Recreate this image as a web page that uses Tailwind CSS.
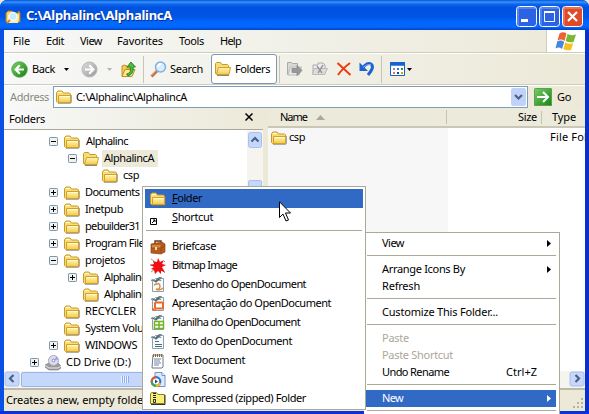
<!DOCTYPE html>
<html lang="en"><head><meta charset="utf-8"><title>C:\Alphalinc\AlphalincA</title>
<script src="https://cdn.jsdelivr.net/npm/@tailwindcss/browser@4"></script></head>
<body class="overflow-hidden bg-[#ece9d8] font-['Noto_Sans','DejaVu_Sans_Condensed',sans-serif] text-[11px] leading-[17px] text-black whitespace-nowrap [&_[data-w]]:pb-[2px]">
<svg class="absolute size-0">
<defs>
<linearGradient id="yel" x2="0" y2="1"><stop stop-color="#fff9b4"/><stop offset="1" stop-color="#f6c846"/></linearGradient>
<linearGradient id="grn" x2="1" y2="1"><stop stop-color="#7ed06a"/><stop offset="1" stop-color="#148010"/></linearGradient>
<linearGradient id="gry" x2="1" y2="1"><stop stop-color="#ddd"/><stop offset="1" stop-color="#999"/></linearGradient>
</defs>
<symbol id="folder" viewBox="0 0 16 16"><path d="M2 14.5h12.5l1-1V6" fill="none" stroke="#777" stroke-opacity=".6"/><path d="M.5 12.5V3.5l1.500-1.500h4l1.500 2h6l1 1v8.500h-13z" fill="#f8dc7c" stroke="#c99a20"/><path d="M2.500 6.500h12v7h-12z" fill="url(#yel)" stroke="#d1a22b"/><path d="M2 3.500h4M3.500 7.500h10" stroke="#fffbd5"/></symbol>
<symbol id="open" viewBox="0 0 16 16"><path d="M2 14.500h12" stroke="#888"/><path d="M.5 12.500V2.500l1-1h4l1.500 2h5.500l1 1v8z" fill="#f7dc7d" stroke="#c99a20"/><path d="M1.500 13.500l2-7h12l-1.500 7z" fill="url(#yel)" stroke="#d1a22b"/></symbol>
<symbol id="plus" viewBox="0 0 9 9"><rect x=".5" y=".5" width="8" height="8" rx=".7" fill="#f4f2ea" stroke="#7898b5"/><path d="M2 4.500h5M4.500 2v5" stroke="#000"/></symbol>
<symbol id="minus" viewBox="0 0 9 9"><rect x=".5" y=".5" width="8" height="8" rx=".7" fill="#f4f2ea" stroke="#7898b5"/><path d="M2 4.500h5" stroke="#000"/></symbol>
<symbol id="page" viewBox="0 0 16 16"><path d="M2.500 4.500l3-3h8v13h-11z" fill="#f8fafc" stroke="#8aa0ad"/><path d="M1 3.500c2-2 3-.5 4 .5 2-3 5-2 6-.5-2-.5-3 0-5 2-2-1.500-3-2-5-2zM7 2c2-2 4-2 5-1" fill="#4a6470" stroke="#607b88" stroke-width=".6"/></symbol>
</svg>

<main class="relative h-[414px] w-[589px] overflow-hidden">
<div class="flex h-[414px] flex-col rounded-t-[7px] bg-[#0831d9]">
 <header class="flex h-[30px] shrink-0 items-center rounded-t-[7px] bg-[linear-gradient(180deg,#0058d8_0%,#3a91fb_7%,#0b65ec_14%,#0052de_25%,#0054e5_55%,#0268fd_75%,#0267fc_90%,#0043c8_100%)] pl-[5px] pr-[6px] pt-[3px]">
  <svg class="size-4" viewBox="0 0 16 16"><path d="M1 13V4l2-2h4l1 2h5l1-2 1 2v9z" fill="#f4cf65" stroke="#a97818"/><path d="M3 6h11l-1 8H2z" fill="#ffeea0"/><circle cx="8" cy="7.500" r="4" fill="#c6ecff" stroke="#f5f9ff" stroke-width="1.300"/><path d="M5 11l-3 3" stroke="#d98425" stroke-width="2"/></svg>
  <span data-w="146" class="ml-[5px] text-[13px] font-bold text-white [text-shadow:1px_1px_0_#0a2d8a]">C:\Alphalinc\AlphalincA</span>
  <div class="ml-auto flex gap-[2px]">
   <svg class="size-[21px]" viewBox="0 0 21 21"><rect x=".5" y=".5" width="20" height="20" rx="3" fill="#2c62e4" stroke="#fff"/><path d="M2 19V2h17" fill="none" stroke="#7da2f5"/><path d="M5 14.500h7" stroke="#fff" stroke-width="3"/></svg>
   <svg class="size-[21px]" viewBox="0 0 21 21"><rect x=".5" y=".5" width="20" height="20" rx="3" fill="#2c62e4" stroke="#fff"/><path d="M2 19V2h17" fill="none" stroke="#7da2f5"/><path d="M5.500 5.500h10v10h-10zM5 6.500h11" fill="none" stroke="#fff"/><path d="M5 6h11" stroke="#fff" stroke-width="2"/></svg>
   <svg class="size-[21px]" viewBox="0 0 21 21"><rect x=".5" y=".5" width="20" height="20" rx="3" fill="#df4b26" stroke="#fff"/><path d="M2 19V2h17" fill="none" stroke="#f19a7f"/><path d="M6 6l9 9M15 6l-9 9" stroke="#fff" stroke-width="2.200"/></svg>
  </div>
 </header>
 <div class="flex h-[381px] shrink-0 flex-col overflow-hidden border-l-4 border-r-4 border-l-[#0a50e4] border-r-[#0831c9] bg-[#ece9d8]">
  <nav class="flex h-[23px] shrink-0 items-center border-b border-[#d0ccba] bg-linear-to-r from-[#f7f8f8] to-[#ece9d8] pl-[9px]">
   <span class="w-[33px]"><span data-w="17">File</span></span><span class="w-[34px]"><span data-w="18">Edit</span></span><span class="w-[37px]"><span data-w="22">View</span></span><span class="w-[62px]"><span data-w="46">Favorites</span></span><span class="w-[41px]"><span data-w="25">Tools</span></span><span data-w="21">Help</span>
   <div class="ml-auto flex h-[22px] w-[39px] justify-center border-l border-[#d0ccba] bg-white">
    <svg class="mt-px h-5 w-[22px]" viewBox="0 0 22 20"><path d="M4.500 2.500Q8 0 11.500 2.500L9.500 10Q6 7.500 2.500 9.500z" fill="#ee6135"/><path d="M12.500 3Q16 5 21 3.500L18.500 11Q14 12 10.700 10z" fill="#78b832"/><path d="M2.200 10.500Q6 8.500 9.200 11L7 18Q4 15.500.5 17.500z" fill="#4487dc"/><path d="M10.300 11.500Q14 13.500 18.200 12.300L16 19Q12 20 8.300 18z" fill="#f6c023"/></svg>
   </div>
  </nav>
  <div class="flex h-[32px] shrink-0 items-center border-b border-t border-b-[#d0ccba] border-t-white bg-linear-to-r from-[#f7f8f8] to-[#ece9d8]">
   <svg class="ml-[7px] size-[17px]" viewBox="0 0 17 17"><circle cx="8.500" cy="8.500" r="7.800" fill="url(#grn)" stroke="#459b3d" stroke-width=".7"/><path d="M13 8.500H5M8.800 4.300L4.600 8.500l4.200 4.200" fill="none" stroke="#fff" stroke-width="2.200"/></svg>
   <span data-w="23" class="ml-[4px]">Back</span>
   <svg class="ml-[9px] h-[3px] w-[5px]" viewBox="0 0 5 3"><path d="M0 0h5L2.500 3z"/></svg>
   <svg class="ml-[12px] size-[17px]" viewBox="0 0 17 17"><circle cx="8.500" cy="8.500" r="7.500" fill="url(#gry)" stroke="#b5b5b5"/><path d="M4 8.500h8M8.200 4.300l4.200 4.200-4.200 4.200" fill="none" stroke="#fff" stroke-width="2.200"/></svg>
   <svg class="ml-[9px] h-[3px] w-[5px]" viewBox="0 0 5 3"><path d="M0 0h5L2.500 3z" fill="#b9b6a8"/></svg>
   <svg class="ml-[9px] h-[17px] w-[15px]" viewBox="0 0 15 17"><path d="M1 15V5l2-1 3 1v2h5v8z" fill="#f2cc56" stroke="#bd912a"/><path d="M1 15.500l3-7h10l-3 7z" fill="#ffe98a" stroke="#bd912a"/><path d="M5.500 13Q11 12 9 6H6l4-5 4.500 5h-2.300Q13 13 7 15z" fill="#4cba3c" stroke="#18761a" stroke-width=".8"/></svg>
   <i class="ml-[7px] h-[27px] w-px bg-[#c9c5b2]"></i>
   <svg class="ml-[6px] size-[17px]" viewBox="0 0 17 17"><path d="M1.500 15.500l5.500-5.500" stroke="#c66e50" stroke-width="2.800"/><path d="M1 14.500l5-5" stroke="#f0b898"/><circle cx="10.500" cy="6" r="5" fill="#d5f1ff" stroke="#87ace0" stroke-width="1.500"/><path d="M8 6q0-3 3-3" fill="none" stroke="#fff" stroke-width="1.500"/></svg>
   <span data-w="33" class="ml-[3px]">Search</span>
   <div class="ml-[8px] flex h-[30px] w-[66px] items-center rounded-[3px] border border-[#7a98af] bg-white pl-[3px]"><svg class="size-4"><use href="#open"/></svg><span data-w="35" class="ml-[4px]">Folders</span></div>
   <i class="ml-[2px] h-[27px] w-px bg-[#c9c5b2]"></i>
   <svg class="ml-[7px] size-4" viewBox="0 0 16 16"><path d="M.5 13.500v-12h4l1 1h5v11z" fill="#d9d9d4" stroke="#aaa"/><path d="M1 14l2.500-8h11L12 14z" fill="#e9e9e6" stroke="#bbb"/><path d="M5 7.500h5v-3l5 5-5 5v-3H5z" fill="#999" stroke="#777" stroke-width=".6"/></svg>
   <svg class="ml-[9px] size-4" viewBox="0 0 16 16"><path d="M1 4h5V2h5l2 2v9H1z" fill="#eee" stroke="#aaa"/><path d="M.5 13.500l2-6h13l-3 6z" fill="#ddd" stroke="#bbb"/><path d="M5 5l5 7M11 4l-5 8" stroke="#999" stroke-width="1.500"/></svg>
   <svg class="ml-[8px] size-4" viewBox="0 0 16 16"><path d="M1.500 2Q8 8 14.500 14M14 2Q6 8 2 14" fill="none" stroke="#ef3c10" stroke-width="2"/></svg>
   <svg class="ml-[7px] size-4" viewBox="0 0 16 16"><path d="M3 7.500Q8 1 12 3q4 3-3 11" fill="none" stroke="#1d64d1" stroke-width="3"/><path d="M.5 1.500v8.500h8.500z" fill="#1d64d1"/><path d="M4 6.500Q9 2 12 3.500" fill="none" stroke="#6ba5f5"/></svg>
   <i class="ml-[6px] h-[27px] w-px bg-[#c9c5b2]"></i>
   <svg class="ml-[8px] h-[14px] w-[15px]" viewBox="0 0 15 14"><path d="M.5.5h14v13H.5z" fill="#fff" stroke="#1563c5"/><path d="M0 2h15" stroke="#1563d0" stroke-width="3.500"/><path d="M3 6h2v2H3z" fill="#8a8fc5"/><path d="M7 6h2v2H7z" fill="#3375d5"/><path d="M11 6h2v2h-2z" fill="#28983b"/><path d="M3 10h2v2H3z" fill="#ed704a"/><path d="M7 10h2v2H7z" fill="#173b9e"/><path d="M11 10h2v2h-2z" fill="#d2a015"/></svg>
   <svg class="ml-[2px] h-[3px] w-[5px]" viewBox="0 0 5 3"><path d="M0 0h5L2.500 3z"/></svg>
  </div>
  <div class="flex h-[23px] shrink-0 items-center border-t border-white bg-linear-to-r from-[#f7f8f8] to-[#ece9d8]">
   <span data-w="39" class="ml-[6px] text-[#8b897d]">Address</span>
   <div class="ml-[4px] flex h-[22px] w-[475px] items-center border border-[#7f9db9] bg-white pl-[2px]">
    <svg class="size-4"><use href="#folder"/></svg><span data-w="111" class="ml-[4px]">C:\Alphalinc\AlphalincA</span>
    <svg class="ml-auto mr-px h-[18px] w-[15px]" viewBox="0 0 15 18"><rect width="15" height="18" rx="2" fill="#c0d2fa"/><path d="M4 7l3.500 3.500L11 7" fill="none" stroke="#4d6185" stroke-width="2.200"/></svg>
   </div>
   <svg class="ml-[6px] size-[18px]" viewBox="0 0 18 18"><rect width="18" height="18" rx="1.500" fill="url(#grn)"/><rect x=".5" y=".5" width="17" height="17" rx="1" fill="none" stroke="#55a553"/><path d="M3 9h11M9 4l5 5-5 5" fill="none" stroke="#fff" stroke-width="2"/></svg>
   <span data-w="14" class="ml-[5px]">Go</span>
  </div>
  <div class="flex h-[280px] shrink-0">
   <section class="flex w-[259px] shrink-0 flex-col">
    <div class="flex h-[22px] items-center justify-between border-b border-[#aca899] bg-linear-to-r from-[#f7f8f8] to-[#ece9d8] pl-[5px] pr-[10px]"><span data-w="36" class="pt-[2px]">Folders</span><svg class="mb-[4px] size-2" viewBox="0 0 8 8"><path d="M.5.500l7 7M7.500.500l-7 7" stroke="#000" stroke-width="1.500"/></svg></div>
    <div class="flex h-[241px] bg-white">
     <div class="w-[243px] overflow-hidden pt-[3px]">
      <div class="flex h-[17px] items-center pl-[45px]"><svg class="size-[9px]"><use href="#minus"/></svg><svg class="ml-[6px] size-4"><use href="#folder"/></svg><span data-w="42" class="ml-[6px]">Alphalinc</span></div>
      <div class="flex h-[17px] items-center pl-[64px]"><svg class="size-[9px]"><use href="#minus"/></svg><svg class="ml-[6px] size-4"><use href="#open"/></svg><div class="ml-[3px] flex h-[17px] w-[56px] items-center bg-[#ece9d8] pl-[2px]"><span data-w="50">AlphalincA</span></div></div>
      <div class="flex h-[17px] items-center pl-[98px]"><svg class="size-4"><use href="#folder"/></svg><span data-w="16" class="ml-[5px]">csp</span></div>
      <div class="flex h-[17px] items-center pl-[45px]"><svg class="size-[9px]"><use href="#plus"/></svg><svg class="ml-[6px] size-4"><use href="#folder"/></svg><span data-w="110" class="ml-[5px]">Documents and Setting</span></div>
      <div class="flex h-[17px] items-center pl-[45px]"><svg class="size-[9px]"><use href="#plus"/></svg><svg class="ml-[6px] size-4"><use href="#folder"/></svg><span data-w="38" class="ml-[5px]">Inetpub</span></div>
      <div class="flex h-[17px] items-center pl-[45px]"><svg class="size-[9px]"><use href="#plus"/></svg><svg class="ml-[6px] size-4"><use href="#folder"/></svg><span data-w="55" class="ml-[5px]">pebuilder31</span></div>
      <div class="flex h-[17px] items-center pl-[45px]"><svg class="size-[9px]"><use href="#plus"/></svg><svg class="ml-[6px] size-4"><use href="#folder"/></svg><span data-w="64" class="ml-[5px]">Program Files</span></div>
      <div class="flex h-[17px] items-center pl-[45px]"><svg class="size-[9px]"><use href="#minus"/></svg><svg class="ml-[6px] size-4"><use href="#folder"/></svg><span data-w="40" class="ml-[5px]">projetos</span></div>
      <div class="flex h-[17px] items-center pl-[64px]"><svg class="size-[9px]"><use href="#plus"/></svg><svg class="ml-[6px] size-4"><use href="#folder"/></svg><span data-w="42" class="ml-[5px]">Alphalinc</span></div>
      <div class="flex h-[17px] items-center pl-[79px]"><svg class="size-4"><use href="#folder"/></svg><span data-w="42" class="ml-[5px]">Alphalinc</span></div>
      <div class="flex h-[17px] items-center pl-[60px]"><svg class="size-4"><use href="#folder"/></svg><span data-w="51" class="ml-[5px]">RECYCLER</span></div>
      <div class="flex h-[17px] items-center pl-[60px]"><svg class="size-4"><use href="#folder"/></svg><span data-w="74" class="ml-[5px]">System Volume</span></div>
      <div class="flex h-[17px] items-center pl-[45px]"><svg class="size-[9px]"><use href="#plus"/></svg><svg class="ml-[6px] size-4"><use href="#folder"/></svg><span data-w="52" class="ml-[5px]">WINDOWS</span></div>
      <div class="flex h-[17px] items-center pl-[26px]"><svg class="size-[9px]"><use href="#plus"/></svg><svg class="ml-[6px] size-4" viewBox="0 0 16 16"><path d="M0 10l4-2h9l3 3v2l-3 2H4l-4-3z" fill="#9a9a9a" stroke="#777" stroke-width=".6"/><path d="M0 10.500l4 2.500h9l3-2" fill="none" stroke="#eee"/><circle cx="8.500" cy="5.500" r="5" fill="#dcdcf1" stroke="#a8a8bd"/><path d="M8.500 5.500l3-4 2 3z" fill="#a8a8e8"/><circle cx="8.500" cy="5.500" r="1.400" fill="#fff" stroke="#88a"/></svg><span data-w="65" class="ml-[5px]">CD Drive (D:)</span></div>
     </div>
     <div class="w-4 bg-[#f5f4ef] pt-[2px]">
      <svg class="ml-px h-[16px] w-[14px]" viewBox="0 0 14 16"><rect x=".5" y=".5" width="13" height="15" rx="2" fill="#c6d7fc" stroke="#a9c0ee"/><path d="M3.500 9.500L7 6l3.500 3.500" fill="none" stroke="#4d6185" stroke-width="2.200"/></svg>
      <div class="ml-px mt-[32px] h-[90px] w-[14px] rounded-[2px] border border-[#a9c0ee] bg-[#c6d7fc]"></div>
     </div>
    </div>
    <div class="flex h-[17px] bg-[#f5f4ef]">
     <svg class="size-4" viewBox="0 0 16 16"><rect x="1" y="1" width="14" height="14" rx="2" fill="#c6d7fc" stroke="#a9c0ee"/><path d="M9.500 4L6 7.500 9.500 11" fill="none" stroke="#4d6185" stroke-width="2.200"/></svg>
     <div class="ml-px mt-px flex h-[15px] w-[210px] items-center rounded-[2px] border border-[#98b4ec] bg-[#c6d7fc] pl-[99px]"><i class="h-[7px] w-[8px] bg-[repeating-linear-gradient(90deg,#eef4ff_0_1px,#8cb0f8_1px_2px)]"></i></div>
    </div>
   </section>
   <i class="w-[5px] shrink-0 bg-[#ece9d8]"></i>
   <section class="flex w-[317px] shrink-0 flex-col bg-white">
    <div class="flex h-[20px] shrink-0 items-center border-b-2 border-b-[#cbc7b8] bg-[#ebeadb] pl-[12px]">
     <span data-w="27">Name</span><svg class="ml-[9px] h-[5px] w-[9px]" viewBox="0 0 9 5"><path d="M0 5L4.500 0 9 5z" fill="#aca899"/></svg>
     <div class="ml-auto flex h-[14px] w-[139px] items-center border-l border-[#c5c2b3]"><span data-w="19" class="ml-[71px]">Size</span><i class="ml-[4px] h-[13px] w-px bg-[#c5c2b3]"></i><span data-w="24" class="ml-[10px]">Type</span></div>
    </div>
    <div class="flex h-[243px] shrink-0 overflow-hidden">
     <div class="flex w-[180px] shrink-0 items-start bg-[#f7f7f7] pl-[3px]"><svg class="mt-[2px] size-4"><use href="#folder"/></svg><span data-w="16" class="ml-[2px]">csp</span></div>
     <span data-w="55" class="ml-[102px]">File Folder</span>
    </div>
    <div class="flex h-[17px] justify-end bg-[#f5f4ef]"><svg class="size-4" viewBox="0 0 16 16"><rect x="1" y="1" width="14" height="14" rx="2" fill="#c6d7fc" stroke="#a9c0ee"/><path d="M6.500 4L10 7.500 6.500 11" fill="none" stroke="#4d6185" stroke-width="2.200"/></svg></div>
   </section>
  </div>
  <footer class="flex h-[23px] shrink-0 items-center justify-between border-t-2 border-[#bdb9a8] bg-[#ece9d8] pl-[2px]"><span data-w="207">Creates a new, empty folder in the folder.</span><svg class="mt-[6px] size-3" viewBox="0 0 12 12"><path d="M8 0h2v2H8zM4 4h2v2H4zM8 4h2v2H8zM0 8h2v2H0zM4 8h2v2H4zM8 8h2v2H8z" fill="#b8b4a3"/></svg></footer>
 </div>
</div>

<div class="absolute left-[364px] top-[232px] h-[182px] w-[196px] border-r border-t border-[#aca899] bg-white pl-px pt-[2px]">
 <div class="flex h-[17px] items-center pl-[17px] pr-[8px]"><span data-w="22">View</span><svg class="ml-auto h-[7px] w-1" viewBox="0 0 4 7"><path d="M0 0v7l4-3.500z"/></svg></div>
 <hr class="mb-[5px] ml-[2px] mr-[3px] mt-[3px] border-[#aca899]">
 <div class="flex h-[17px] items-center pl-[17px] pr-[8px]"><span data-w="83">Arrange Icons By</span><svg class="ml-auto h-[7px] w-1" viewBox="0 0 4 7"><path d="M0 0v7l4-3.500z"/></svg></div>
 <div class="flex h-[17px] items-center pl-[17px]"><span data-w="38">Refresh</span></div>
 <hr class="mb-[5px] ml-[2px] mr-[3px] mt-[3px] border-[#aca899]">
 <div class="flex h-[17px] items-center pl-[17px]"><span data-w="116">Customize This Folder...</span></div>
 <hr class="mb-[5px] ml-[2px] mr-[3px] mt-[3px] border-[#aca899]">
 <div class="flex h-[17px] items-center pl-[17px] text-[#aca899]"><span data-w="27">Paste</span></div>
 <div class="flex h-[17px] items-center pl-[17px] text-[#aca899]"><span data-w="71">Paste Shortcut</span></div>
 <div class="flex h-[17px] items-center pl-[17px] pr-[22px]"><span data-w="67">Undo Rename</span><span data-w="31" class="ml-auto">Ctrl+Z</span></div>
 <hr class="mb-[5px] ml-[2px] mr-[3px] mt-[3px] border-[#aca899]">
 <div class="mr-[3px] flex h-[17px] items-center bg-[#316ac5] pl-[17px] pr-[5px] text-white"><span data-w="21">New</span><svg class="ml-auto h-[7px] w-1" viewBox="0 0 4 7"><path d="M0 0v7l4-3.500z" fill="#fff"/></svg></div>
 <hr class="ml-[2px] mr-[3px] mt-[3px] border-[#aca899]">
</div>

<div class="absolute left-[142px] top-[186px] h-[224px] w-[224px] border border-[#aca899] bg-white px-[2px] pt-[2px]">
 <div class="flex h-[19px] items-center bg-[#316ac5] pl-[5px]"><svg class="size-4"><use href="#folder"/></svg><span data-w="30" class="ml-[6px]"><u>F</u>older</span></div>
 <div class="flex h-[19px] items-center pl-[5px]"><svg class="size-4" viewBox="0 0 16 16"><path d="M.5 8.500h6v6h-6z" fill="#fff" stroke="#000"/><path d="M2 13l3-3M3 10h2v2" fill="none" stroke="#000"/></svg><span data-w="41" class="ml-[6px]"><u>S</u>hortcut</span></div>
 <hr class="mx-px mb-[6px] mt-[3px] border-[#aca899]">
 <div class="flex h-[19px] items-center pl-[5px]"><svg class="size-4" viewBox="0 0 16 16"><path d="M5 5V2h6v3" fill="none" stroke="#6b3515" stroke-width="1.400"/><path d="M1 5l11-2 3 2v8l-4 2-10-1z" fill="#b65b1f" stroke="#8d4518" stroke-width=".7"/><path d="M2 6h9v3H2z" fill="#d98442"/><path d="M11 6v8M1 9h10l4-2" fill="none" stroke="#8d4518" stroke-width=".7"/><path d="M5 8h2v3H5z" fill="#f8d888"/></svg><span data-w="44" class="ml-[6px]">Briefcase</span></div>
 <div class="flex h-[19px] items-center pl-[5px]"><svg class="size-4" viewBox="0 0 16 16"><path d="M7 4l1-4 2 4 4-2-2 4 4 1-4 2 1 2 2 3-4-1 0 3-3-3-3 3-1-4-3-1 3-2-4-2 4-1-1-3z" fill="#f20d10"/><path d="M1 1l3 2M13 13l2 2M1 14l3-2M14 4l1-1M0 7h2" stroke="#333" stroke-opacity=".5"/></svg><span data-w="65" class="ml-[6px]">Bitmap Image</span></div>
 <div class="flex h-[19px] items-center pl-[5px]"><svg class="size-4" viewBox="0 0 16 16"><use href="#page"/><path d="M4 8q6-3 6 1t-4 3q4 2 7-1" fill="none" stroke="#d88b3c" stroke-width="1.400"/></svg><span data-w="134" class="ml-[6px]">Desenho do OpenDocument</span></div>
 <div class="flex h-[19px] items-center pl-[5px]"><svg class="size-4" viewBox="0 0 16 16"><use href="#page"/><rect x="5" y="6.500" width="8" height="6" rx="1" fill="#fff" stroke="#ed6a25" stroke-width="2"/><path d="M3 12v2h3" fill="none" stroke="#ed6a25" stroke-width="1.500"/></svg><span data-w="159" class="ml-[6px]">Apresentação do OpenDocument</span></div>
 <div class="flex h-[19px] items-center pl-[5px]"><svg class="size-4" viewBox="0 0 16 16"><use href="#page"/><path d="M4.500 6.500h9v7h-9zM9 6v8M4 10h10" fill="#fff" stroke="#72b51c" stroke-width="1.500"/></svg><span data-w="128" class="ml-[6px]">Planilha do OpenDocument</span></div>
 <div class="flex h-[19px] items-center pl-[5px]"><svg class="size-4" viewBox="0 0 16 16"><use href="#page"/><path d="M5 7.500h4M5 10.500h7M5 12.500h7" stroke="#3e7289"/></svg><span data-w="120" class="ml-[6px]">Texto do OpenDocument</span></div>
 <div class="flex h-[19px] items-center pl-[5px]"><svg class="size-4" viewBox="0 0 16 16"><path d="M3 2h10v12l-1 1H2z" fill="#fff" stroke="#6b7990"/><path d="M4 6h7M4 8h6M4 10h7M4 12h5" stroke="#7583a0"/><path d="M3 2.500h10" stroke="#8b6b25" stroke-width="3" stroke-dasharray="1 1"/></svg><span data-w="73" class="ml-[6px]">Text Document</span></div>
 <div class="flex h-[19px] items-center pl-[5px]"><svg class="size-4" viewBox="0 0 16 16"><path d="M5 .5h7l3 3v11H5z" fill="#ddeaff" stroke="#7390c8"/><path d="M12 .5v3h3" fill="#fff" stroke="#7390c8"/><circle cx="6" cy="9.500" r="4.300" fill="#fff" stroke="#2878d8" stroke-width="2.200"/><path d="M1.800 9.500A4.300 4.300 0 0 1 6 5.200" fill="none" stroke="#f05528" stroke-width="2.200"/><path d="M1.800 9.500A4.300 4.300 0 0 0 6 13.800" fill="none" stroke="#40a845" stroke-width="2.200"/><path d="M6 13.800A4.300 4.300 0 0 0 10 11" fill="none" stroke="#efb820" stroke-width="2.200"/><path d="M5 7.500v4l3-2z" fill="#184b9c"/></svg><span data-w="61" class="ml-[6px]">Wave Sound</span></div>
 <div class="flex h-[19px] items-center pl-[5px]"><svg class="size-4" viewBox="0 0 16 16"><path d="M.5 12.500V3l1-1.500h5l1.500 2h6.500v9z" fill="#f7ef79" stroke="#8d8615"/><path d="M1 13.500h14V4" fill="none" stroke="#333"/><path d="M4.500 2v8" stroke="#222" stroke-width="3" stroke-dasharray="1 1"/><path d="M3.500 8.500h2v3h-2z" fill="#ddd" stroke="#333"/></svg><span data-w="134" class="ml-[6px]">Compressed (zipped) Folder</span></div>
</div>

<svg class="absolute left-[279px] top-[201px] h-[21px] w-3" viewBox="0 0 12 21"><path d="M.5.800v15.700l3.500-3.500 3 7 2.500-1-3-7h5z" fill="#fff" stroke="#000"/></svg>
</main>
<script>
function fitLabels() {
  document.querySelectorAll('[data-w]').forEach(function (el) {
    el.style.letterSpacing = '0px';
    el.style.display = 'inline-block';
    el.style.flexShrink = '0';
    el.style.width = 'auto';
    var range = document.createRange();
    range.selectNodeContents(el);
    var width = range.getBoundingClientRect().width;
    el.style.letterSpacing = ((+el.dataset.w - width) / el.textContent.length) + 'px';
    el.style.width = el.dataset.w + 'px';
  });
}
fitLabels();
window.addEventListener('load', fitLabels);
document.fonts.ready.then(fitLabels);
</script>
</body></html>
